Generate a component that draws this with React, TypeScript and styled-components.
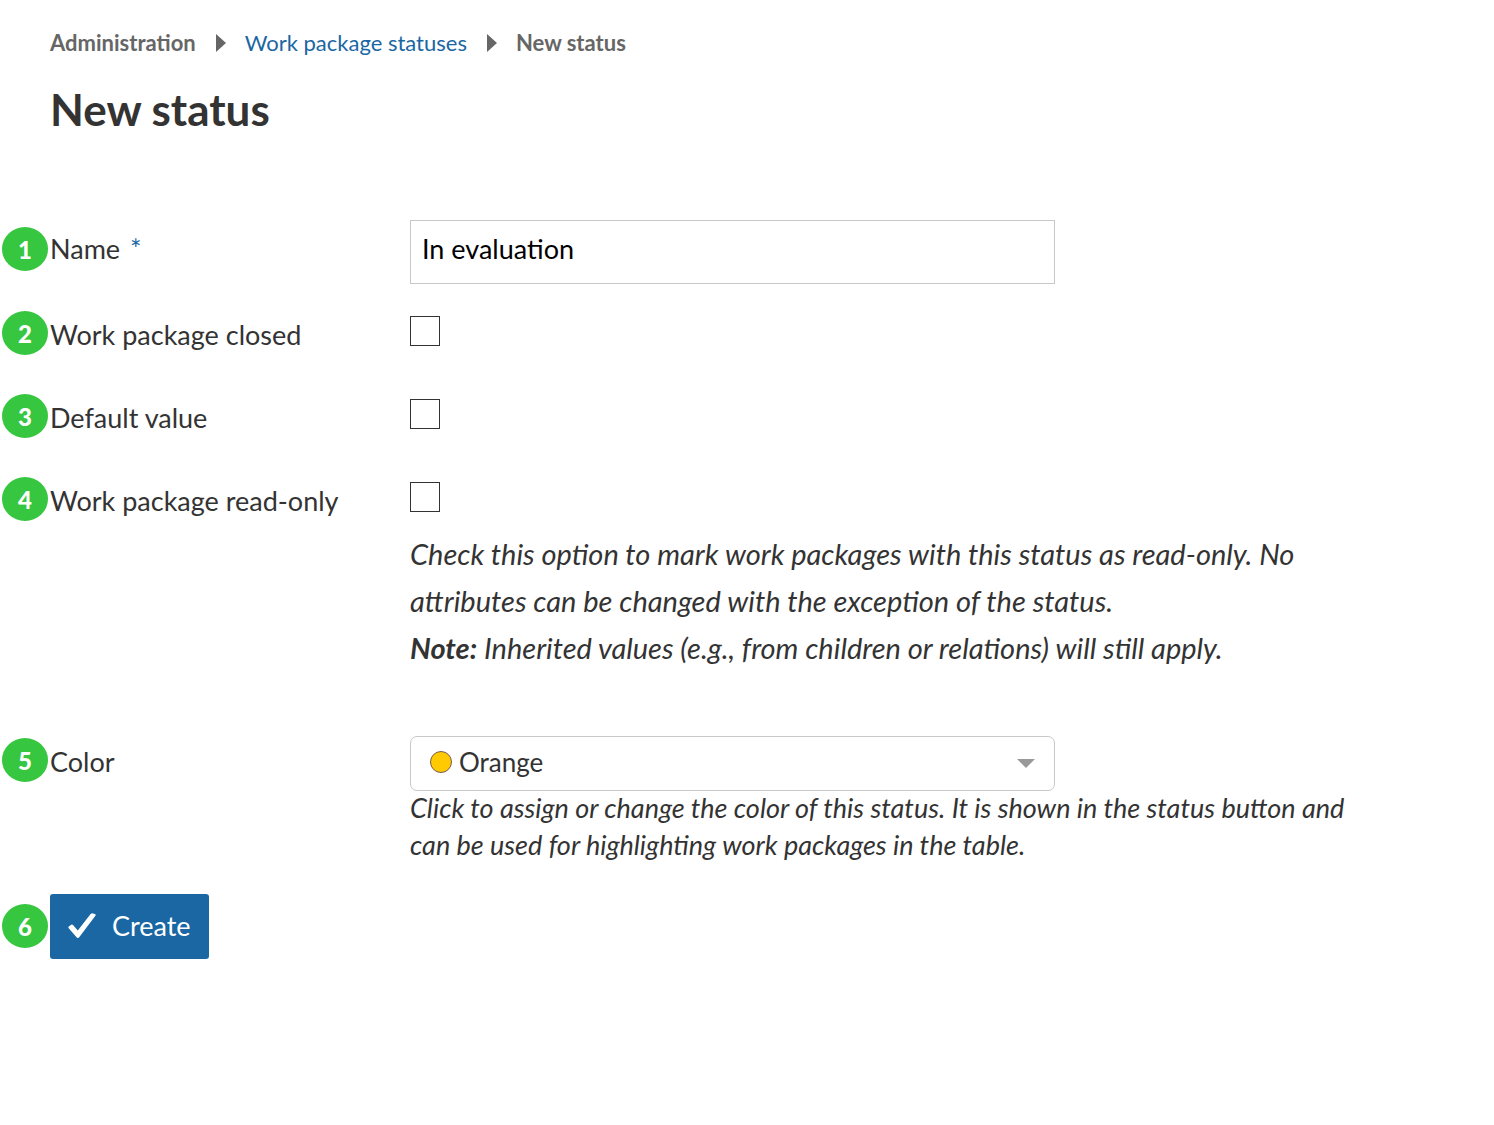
import React, { useState } from "react";
import styled, { createGlobalStyle } from "styled-components";

const GlobalStyle = createGlobalStyle`
  * { box-sizing: border-box; }
  body {
    margin: 0;
    background: #fff;
    color: #333;
    font-family: Lato, "Open Sans", sans-serif;
    font-size: 27px;
  }
`;

const Page = styled.main`
  padding: 25px 2px 40px;
`;

const Header = styled.header`
  padding: 0 48px;
`;

const Crumbs = styled.ol`
  display: flex;
  align-items: center;
  flex-wrap: wrap;
  gap: 20px;
  margin: 0;
  padding: 0;
  list-style: none;
  font-size: 22px;
  line-height: 36px;
`;

const Crumb = styled.li`
  display: flex;
  align-items: center;
  gap: 19px;
  font-weight: 700;
  color: #666;
`;

const CrumbLink = styled.a`
  font-weight: 400;
  color: #1a67a3;
  text-decoration: none;
`;

const Title = styled.h1`
  margin: 20px 0 83px;
  font-size: 44px;
  line-height: 56px;
  font-weight: 700;
`;

const Form = styled.form`
  display: flex;
  flex-direction: column;
  gap: 20px;
`;

const Row = styled.div<{ $spaced?: boolean }>`
  display: grid;
  grid-template-columns: 46px 358px minmax(0, 940px);
  column-gap: 2px;
  align-items: start;
  min-height: 63px;
  margin-top: ${(p) => (p.$spaced ? "43px" : "0")};
`;

const Badge = styled.span<{ $top?: number }>`
  display: flex;
  align-items: center;
  justify-content: center;
  width: 46px;
  height: 44px;
  margin-top: ${(p) => p.$top ?? 7}px;
  border-radius: 50%;
  background: #37c63f;
  color: #fff;
  font-size: 24px;
  font-weight: 900;
`;

const Label = styled.label<{ $height?: number }>`
  line-height: ${(p) => p.$height ?? 62}px;
`;

const Required = styled.span`
  margin-left: 10px;
  color: #1a67a3;
`;

const TextInput = styled.input`
  width: 100%;
  max-width: 645px;
  height: 64px;
  padding: 0 11px 7px;
  border: 1px solid #c8c8c8;
  border-radius: 0;
  background: #fff;
  color: #000;
  font: inherit;
`;

const Checkbox = styled.input`
  appearance: none;
  display: block;
  width: 30px;
  height: 30px;
  margin: 12px 0 0;
  border: 1px solid #333;
  background: #fff;

  &:checked {
    background: #1a67a3;
    box-shadow: inset 0 0 0 4px #fff;
  }
`;

const Help = styled.p<{ $large?: boolean }>`
  margin: ${(p) => (p.$large ? "18px 0 2px" : "-2px 0 0")};
  font-size: ${(p) => (p.$large ? 29 : 27)}px;
  line-height: ${(p) => (p.$large ? 47 : 37)}px;
  font-style: italic;
`;

const SelectBox = styled.div`
  position: relative;
  width: 100%;
  max-width: 645px;
`;

const Select = styled.select`
  appearance: none;
  display: block;
  width: 100%;
  height: 55px;
  padding: 0 48px 4px;
  border: 1px solid #c8c8c8;
  border-radius: 7px;
  background: #fff;
  color: #333;
  font: inherit;
  font-size: 26px;
`;

const Swatch = styled.span<{ $color: string }>`
  position: absolute;
  top: 15px;
  left: 20px;
  width: 22px;
  height: 22px;
  border: 1px solid #7a5a50;
  border-radius: 50%;
  background: ${(p) => p.$color};
  pointer-events: none;
`;

const Caret = styled.svg`
  position: absolute;
  top: 23px;
  right: 20px;
  pointer-events: none;
`;

const Actions = styled.div`
  display: flex;
  gap: 2px;
  margin-top: 11px;
`;

const CreateButton = styled.button`
  display: flex;
  align-items: center;
  gap: 16px;
  height: 65px;
  padding: 0 18px 2px;
  border: 0;
  border-radius: 3px;
  background: #1a67a3;
  color: #fff;
  font: inherit;
`;

const Arrow = () => (
  <svg width="10" height="18" viewBox="0 0 10 18" aria-hidden="true">
    <path d="M0 0L10 9L0 18Z" fill="#666" />
  </svg>
);

const COLORS: Record<string, string> = {
  Orange: "#ffcb00",
  Blue: "#1a67a3",
  Green: "#37c63f",
};

const FLAGS = [
  { id: "closed", label: "Work package closed" },
  { id: "default", label: "Default value" },
  { id: "readonly", label: "Work package read-only" },
];

export default function App() {
  const [name, setName] = useState("In evaluation");
  const [color, setColor] = useState("Orange");

  return (
    <>
      <GlobalStyle />
      <Page>
        <Header>
          <nav aria-label="Breadcrumb">
            <Crumbs>
              <Crumb>Administration</Crumb>
              <Crumb>
                <Arrow />
                <CrumbLink href="#statuses">Work package statuses</CrumbLink>
              </Crumb>
              <Crumb>
                <Arrow />
                New status
              </Crumb>
            </Crumbs>
          </nav>
          <Title>New status</Title>
        </Header>

        <Form onSubmit={(e) => e.preventDefault()}>
          <Row>
            <Badge>1</Badge>
            <Label htmlFor="name" $height={58}>
              Name
              <Required>*</Required>
            </Label>
            <TextInput
              id="name"
              type="text"
              required
              value={name}
              onChange={(e) => setName(e.target.value)}
            />
          </Row>

          {FLAGS.map((flag, i) => (
            <Row key={flag.id}>
              <Badge>{i + 2}</Badge>
              <Label htmlFor={flag.id}>{flag.label}</Label>
              <div>
                <Checkbox id={flag.id} type="checkbox" />
                {flag.id === "readonly" && (
                  <Help $large>
                    Check this option to mark work packages with this status as
                    read-only. No attributes can be changed with the exception
                    of the status.
                    <br />
                    <strong>Note:</strong> Inherited values (e.g., from children
                    or relations) will still apply.
                  </Help>
                )}
              </div>
            </Row>
          ))}

          <Row $spaced>
            <Badge $top={2}>5</Badge>
            <Label htmlFor="color" $height={51}>
              Color
            </Label>
            <div>
              <SelectBox>
                <Select
                  id="color"
                  value={color}
                  onChange={(e) => setColor(e.target.value)}
                >
                  {Object.keys(COLORS).map((c) => (
                    <option key={c}>{c}</option>
                  ))}
                </Select>
                <Swatch $color={COLORS[color]} />
                <Caret width="18" height="9" viewBox="0 0 18 9" aria-hidden="true">
                  <path d="M0 0H18L9 9Z" fill="#999" />
                </Caret>
              </SelectBox>
              <Help>
                Click to assign or change the color of this status. It is shown
                in the status button and can be used for highlighting work
                packages in the table.
              </Help>
            </div>
          </Row>

          <Actions>
            <Badge $top={10}>6</Badge>
            <CreateButton type="submit">
              <svg width="28" height="26" viewBox="0 0 28 26" aria-hidden="true">
                <path
                  d="M0.7 15.2Q0 14.2 0.8 13.4L3.2 11.7Q4.2 11 5 12L9.8 17.6L22.4 1.3Q23.4 0.2 24.8 0.4L27 1Q28.2 1.6 27.4 2.8L11.2 24.2Q10 25.6 8.8 24.4Z"
                  fill="#fff"
                />
              </svg>
              Create
            </CreateButton>
          </Actions>
        </Form>
      </Page>
    </>
  );
}
